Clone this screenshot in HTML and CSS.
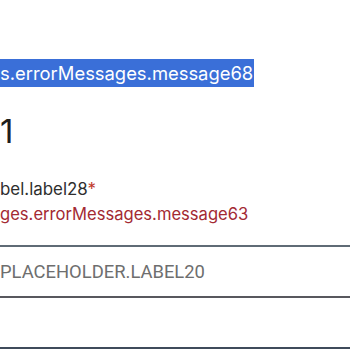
FILE: index.html
```html
<!DOCTYPE html>
<html>
<head>
<meta charset="utf-8">
<link rel="stylesheet" href="styles.css">
</head>
<body>
<div class="page">
  <div class="banner-row"><span class="banner">s.errorMessages.message68</span></div>
  <div class="value">1</div>
  <div class="label">bel.label28<span class="req">*</span></div>
  <div class="error">ges.errorMessages.message63</div>
  <div class="field"><span class="placeholder">PLACEHOLDER.LABEL20</span></div>
  <div class="field2"></div>
</div>
</body>
</html>
```
FILE: styles.css
```css
html, body {
  margin: 0;
  padding: 0;
  background: #ffffff;
}
.page {
  width: 350px;
  height: 350px;
  overflow: hidden;
  font-family: Inter, "Noto Sans", sans-serif;
}
.banner-row {
  padding-top: 59px;
  height: 28px;
}
.banner {
  display: inline-block;
  height: 28px;
  line-height: 28px;
  font-size: 18.4px;
  color: #ffffff;
  background: #3a6fd8;
  padding-right: 1px;
}
.value {
  margin-top: 24px;
  font-size: 33px;
  line-height: 40px;
  color: #1e1e1e;
}
.label {
  margin-top: 27px;
  font-size: 16.9px;
  line-height: 22px;
  color: #2e2e2e;
}
.req {
  color: #c0392b;
}
.error {
  margin-top: 3px;
  font-size: 16.6px;
  line-height: 22px;
  color: #a32a33;
}
.field {
  margin-top: 20px;
  height: 49px;
  border-top: 2px solid #5f6b75;
  border-bottom: 2px solid #58585e;
  display: flex;
  align-items: center;
}
.placeholder {
  font-family: Roboto, sans-serif;
  font-size: 18.4px;
  color: #6e6e6e;
}
.field2 {
  height: 49px;
  border-bottom: 2px solid #3f4b5b;
}
```
